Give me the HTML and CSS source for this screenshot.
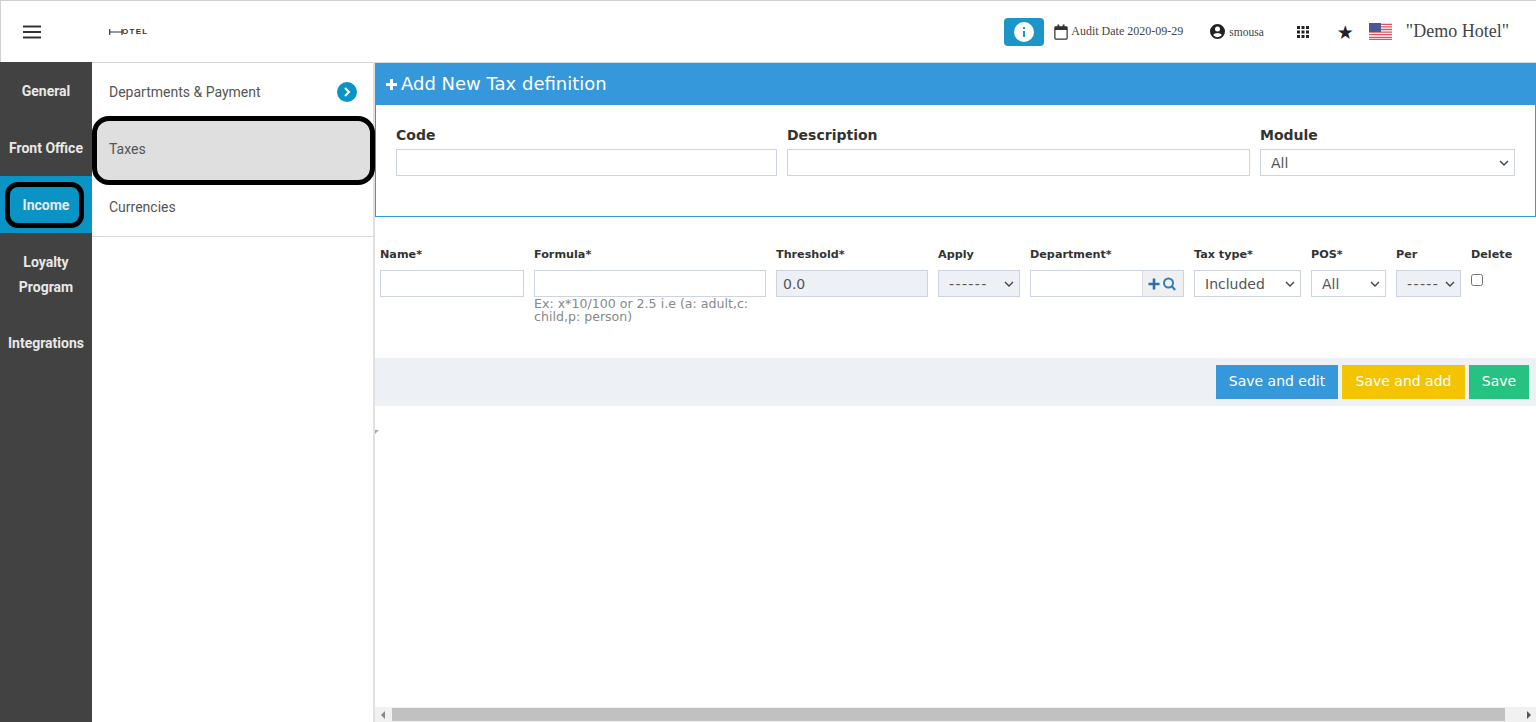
FILE: index.html
```html
<!DOCTYPE html>
<html lang="en">
<head>
    <meta charset="UTF-8">
    <meta name="viewport" content="width=device-width, initial-scale=1.0">
    <title>Add New Tax definition</title>
    <link rel="stylesheet" href="styles.css">
</head>
<body>
    <header class="topbar">
        <button class="menu-btn" aria-label="Menu">
            <svg width="20" height="14" viewBox="0 0 20 14"><path d="M1 1.500h18M1 7h18M1 12.500h18" stroke="#333" stroke-width="2"/></svg>
        </button>
        <div class="logo">
            <svg width="14" height="6" viewBox="0 0 14 6"><path d="M.7 0v6M13 0v6M1 3h12" stroke="#333" stroke-width="1.200"/></svg>
            <span class="logo-text">OTEL</span>
        </div>
        <div class="top-right">
            <button class="info-btn" aria-label="Info">
                <svg width="20" height="20" viewBox="0 0 20 20"><circle cx="10" cy="10" r="10" fill="#fff"/><path d="M10 5v2M10 9v6" stroke="#1b96c6" stroke-width="2"/></svg>
            </button>
            <div class="audit">
                <svg width="14" height="16" viewBox="0 0 16 17" preserveAspectRatio="none"><path d="M2 3h12a1 1 0 0 1 1 1v11a1 1 0 0 1-1 1H2a1 1 0 0 1-1-1V4a1 1 0 0 1 1-1z" fill="none" stroke="#333" stroke-width="1.400"/><path d="M1 3h14v3.500H1zM4 0.500h2V3H4zM10 0.500h2V3h-2z" fill="#333"/></svg>
                <span>Audit Date 2020-09-29</span>
            </div>
            <div class="user">
                <svg width="15" height="15" viewBox="0 0 24 24"><path fill="#222" d="M12 0a12 12 0 1 0 0 24 12 12 0 0 0 0-24zm0 4a4 4 0 1 1 0 8 4 4 0 0 1 0-8zm0 17a9 9 0 0 1-7-3.400c1-2.200 4.500-3.300 7-3.300s6 1.100 7 3.300A9 9 0 0 1 12 21z"/></svg>
                <span>smousa</span>
            </div>
            <svg class="apps" width="12" height="12" viewBox="0 0 12 12" fill="#222"><path d="M0 0h3v3H0zM4.500 0h3v3h-3zM9 0h3v3H9zM0 4.500h3v3H0zM4.500 4.500h3v3h-3zM9 4.500h3v3H9zM0 9h3v3H0zM4.500 9h3v3h-3zM9 9h3v3H9z"/></svg>
            <span class="star">★</span>
            <svg class="flag" width="23" height="17" viewBox="0 0 23 17">
                <rect width="23" height="17" fill="#fff"/>
                <path d="M0 1.300h23M0 3.900h23M0 6.500h23M0 9.100h23M0 11.700h23M0 14.300h23M0 16.500h23" stroke="#d9525e" stroke-width="1.300"/>
                <rect width="12" height="9" fill="#4a5a94"/>
            </svg>
            <span class="hotel-name">"Demo Hotel"</span>
        </div>
    </header>

    <div class="layout">
        <nav class="sidebar">
            <a class="side-item">General</a>
            <a class="side-item">Front Office</a>
            <a class="side-item active"><span class="ring">Income</span></a>
            <a class="side-item tall">Loyalty Program</a>
            <a class="side-item end">Integrations</a>
        </nav>

        <nav class="submenu">
            <a class="sub-item">
                Departments &amp; Payment
                <svg class="sub-arrow" width="20" height="20" viewBox="0 0 20 20"><circle cx="10" cy="10" r="10" fill="#0a94c6"/><path d="M8 6l4 4-4 4" fill="none" stroke="#fff" stroke-width="2"/></svg>
            </a>
            <a class="sub-item selected">Taxes</a>
            <a class="sub-item last">Currencies</a>
        </nav>

        <main class="content">
            <section class="panel">
                <h1 class="panel-title">
                    <svg class="plus" width="11" height="11" viewBox="0 0 11 11"><path d="M5.500 0v11M0 5.500h11" stroke="#fff" stroke-width="3"/></svg>
                    Add New Tax definition
                </h1>
                <div class="panel-form">
                    <div class="field">
                        <label>Code</label>
                        <input type="text" class="inputC">
                    </div>
                    <div class="field">
                        <label>Description</label>
                        <input type="text" class="inputC">
                    </div>
                    <div class="field">
                        <label>Module</label>
                        <select class="inputC"><option>All</option></select>
                    </div>
                </div>
            </section>

            <div class="tax-grid">
                <div class="cell">
                    <label>Name*</label>
                    <input type="text" class="inputC">
                </div>
                <div class="cell">
                    <label>Formula*</label>
                    <input type="text" class="inputC">
                    <p class="help">Ex: x*10/100 or 2.5 i.e (a: adult,c: child,p: person)</p>
                </div>
                <div class="cell">
                    <label>Threshold*</label>
                    <input type="text" class="inputC readonly" value="0.0">
                </div>
                <div class="cell">
                    <label>Apply</label>
                    <select class="inputC readonly dashes"><option>------</option></select>
                </div>
                <div class="cell">
                    <label>Department*</label>
                    <div class="lookup">
                        <input type="text" class="lookup-input">
                        <span class="lookup-btn">
                            <svg width="30" height="14" viewBox="0 0 30 14"><path d="M6 1.500v11M.5 7h11" stroke="#2f6fa8" stroke-width="2.600"/><circle cx="20.500" cy="6" r="4.500" fill="none" stroke="#2f7fbf" stroke-width="2"/><path d="M23.800 9.300l3.400 3.700" stroke="#2f7fbf" stroke-width="2.200"/></svg>
                        </span>
                    </div>
                </div>
                <div class="cell">
                    <label>Tax type*</label>
                    <select class="inputC"><option>Included</option></select>
                </div>
                <div class="cell">
                    <label>POS*</label>
                    <select class="inputC"><option>All</option></select>
                </div>
                <div class="cell">
                    <label>Per</label>
                    <select class="inputC readonly dashes"><option>-----</option></select>
                </div>
                <div class="cell">
                    <label class="delete-label">Delete</label>
                    <input type="checkbox" class="check">
                </div>
            </div>

            <div class="actions">
                <button class="btn blue">Save and edit</button>
                <button class="btn yellow">Save and add</button>
                <button class="btn green">Save</button>
            </div>

            <div class="filler"><span class="mark"></span></div>

            <div class="hscroll">
                <span class="arrow-left"></span>
                <div class="thumb"></div>
                <span class="arrow-right"></span>
            </div>
        </main>
    </div>
</body>
</html>
```

FILE: styles.css
```css
* {
    box-sizing: border-box;
}

html, body {
    height: 100%;
}

body {
    margin: 0;
    height: 722px;
    overflow: hidden;
    display: flex;
    flex-direction: column;
    background-color: #fff;
    font-family: "DejaVu Sans", sans-serif;
    color: #333;
}

/* top bar */
.topbar {
    height: 62px;
    flex: none;
    display: flex;
    align-items: center;
    border-top: 1px solid #d0d0d0;
    border-left: 1px solid #d0d0d0;
    background-color: #fff;
}

.menu-btn {
    width: 20px;
    height: 14px;
    margin-left: 21px;
    padding: 0;
    border: 0;
    display: flex;
    background: none;
}

.logo {
    margin-left: 67px;
    display: flex;
    align-items: center;
}

.logo-text {
    font-family: "Liberation Sans", sans-serif;
    font-size: 8px;
    font-weight: 700;
    letter-spacing: 1.300px;
    margin-left: -1px;
}

.top-right {
    margin-left: auto;
    display: flex;
    align-items: center;
    font-family: "Liberation Serif", serif;
    color: #444;
}

.info-btn {
    width: 40px;
    height: 28px;
    padding: 0;
    border: 0;
    border-radius: 4px;
    background-color: #1b96c6;
    display: flex;
    align-items: center;
    justify-content: center;
}

.audit {
    margin-left: 10px;
    display: flex;
    align-items: center;
    font-size: 12px;
    gap: 3px;
}

.user {
    margin-left: 27px;
    display: flex;
    align-items: center;
    font-size: 11.5px;
    gap: 4px;
}

.apps {
    margin-left: 33px;
}

.star {
    margin-left: 28px;
    font-family: "DejaVu Sans", sans-serif;
    font-size: 19px;
    color: #222;
}

.flag {
    margin-left: 15px;
}

.hotel-name {
    margin-left: 14px;
    margin-right: 27px;
    font-size: 18px;
}

/* columns */
.layout {
    flex: 1;
    min-height: 0;
    display: flex;
}

.sidebar {
    width: 92px;
    flex: none;
    background-color: #424242;
    font-family: "Roboto", sans-serif;
    font-size: 14px;
    font-weight: 700;
    color: #e8e8e8;
}

.side-item {
    height: 57px;
    padding-top: 2px;
    display: flex;
    align-items: center;
    justify-content: center;
    text-align: center;
    line-height: 25px;
}

.side-item.tall {
    height: 82px;
    padding: 2px 15px 0;
}

.side-item.end {
    padding-top: 0;
}

.side-item.active {
    padding-top: 0;
    background-color: #0a94c6;
}

.ring {
    width: 79px;
    height: 46px;
    display: flex;
    align-items: center;
    justify-content: center;
    margin-left: -3px;
    padding: 2px 0 0 3px;
    border: 5px solid #000;
    border-radius: 13px;
}

.submenu {
    width: 283px;
    flex: none;
    border-top: 1px solid #d8d8d8;
    border-right: 2px solid #e0e0e0;
    font-family: "Roboto", sans-serif;
    font-size: 14px;
    color: #555;
}

.sub-item {
    height: 57px;
    padding: 0 16px 0 17px;
    display: flex;
    align-items: center;
    justify-content: space-between;
}

.sub-item.selected {
    position: relative;
    height: 69px;
    margin: -4px -2px -6px 0;
    padding-bottom: 3px;
    border: 5px solid #000;
    border-radius: 17px;
    background-color: #dfdfdf;
    padding-left: 12px;
}

.sub-item.last {
    height: 58px;
    padding-bottom: 1px;
    border-bottom: 1px solid #d8d8d8;
}

/* main form */
.content {
    flex: 1;
    min-width: 0;
    display: flex;
    flex-direction: column;
    border-top: 1px solid #d8d8d8;
}

.panel {
    height: 154px;
    flex: none;
    border-left: 1px solid #3498db;
    border-right: 1px solid #3498db;
    border-bottom: 1px solid #3498db;
}

.panel-title {
    margin: 0 0 0 -1px;
    height: 42px;
    padding: 0 0 2px 11px;
    display: flex;
    align-items: center;
    gap: 4px;
    background-color: #3498db;
    color: #fff;
    font-size: 18px;
    font-weight: 400;
}

.plus {
    margin-top: 3px;
}

.panel-form {
    display: grid;
    grid-template-columns: 381px 463px 255px;
    gap: 10px;
    padding: 22px 0 0 20px;
}

.field label {
    display: block;
    font-size: 14px;
    font-weight: 700;
    line-height: 17px;
    margin-bottom: 5px;
}

.inputC {
    display: block;
    width: 100%;
    height: 27px;
    padding: 0 6px;
    border: 1px solid #cdd3e0;
    border-radius: 0;
    background-color: #fff;
    font-family: "DejaVu Sans", sans-serif;
    font-size: 14px;
    color: #555;
}

select.inputC {
    appearance: none;
    padding: 0 10px;
    background-image: url("data:image/svg+xml,%3Csvg xmlns='http://www.w3.org/2000/svg' width='10' height='6'%3E%3Cpath d='M1 1l4 4 4-4' fill='none' stroke='%23444' stroke-width='1.400'/%3E%3C/svg%3E");
    background-repeat: no-repeat;
    background-position: right 5px center;
}

.readonly {
    background-color: #edf0f5;
}

.dashes {
    letter-spacing: 1.400px;
}

.tax-grid {
    display: grid;
    grid-template-columns: 144px 232px 152px 82px 154px 107px 75px 65px 50px;
    gap: 10px;
    height: 141px;
    padding: 30px 0 0 5px;
}

.cell label {
    display: block;
    font-size: 11.200px;
    font-weight: 700;
    line-height: 15px;
    margin-bottom: 8px;
    white-space: nowrap;
}

.cell .delete-label {
    margin-bottom: 12px;
}

.help {
    margin: 0;
    font-size: 12.600px;
    line-height: 13px;
    color: #888;
}

.lookup {
    height: 27px;
    display: flex;
    border: 1px solid #cdd3e0;
}

.lookup-input {
    flex: 1;
    min-width: 0;
    border: 0;
}

.lookup-btn {
    width: 41px;
    display: flex;
    align-items: center;
    justify-content: center;
    border-left: 1px solid #dde;
    background-color: #f0f0f0;
}

.check {
    display: block;
    width: 12px;
    height: 12px;
    margin: 0;
}

.actions {
    height: 48px;
    flex: none;
    display: flex;
    align-items: flex-start;
    justify-content: flex-end;
    gap: 4px;
    padding: 7px 7px 0 0;
    background-color: #edf0f5;
}

.btn {
    height: 34px;
    padding: 0 0 2px;
    border: 0;
    font-family: "DejaVu Sans", sans-serif;
    font-size: 14px;
    color: #fff;
}

.blue {
    width: 122px;
    background-color: #3498db;
}

.yellow {
    width: 123px;
    background-color: #f5c400;
}

.green {
    width: 60px;
    background-color: #26c281;
}

.filler {
    flex: 1;
    position: relative;
}

.mark {
    position: absolute;
    left: 0;
    top: 24px;
    width: 4px;
    height: 4px;
    background-color: #aaa;
    clip-path: polygon(0 0, 100% 0, 0 100%);
}

/* bottom scrollbar */
.hscroll {
    height: 15px;
    flex: none;
    display: flex;
    align-items: center;
    background-color: #f1f1f1;
}

.thumb {
    width: 1113px;
    height: 13px;
    background-color: #c1c1c1;
}

.arrow-left,
.arrow-right {
    width: 17px;
    height: 15px;
    position: relative;
    flex: none;
}

.arrow-left::after,
.arrow-right::after {
    content: "";
    position: absolute;
    top: 4px;
    border-top: 4px solid transparent;
    border-bottom: 4px solid transparent;
}

.arrow-left::after {
    left: 6px;
    border-right: 4px solid #888;
}

.arrow-right {
    margin-left: auto;
}

.arrow-right::after {
    left: 8px;
    border-left: 4px solid #555;
}
```
